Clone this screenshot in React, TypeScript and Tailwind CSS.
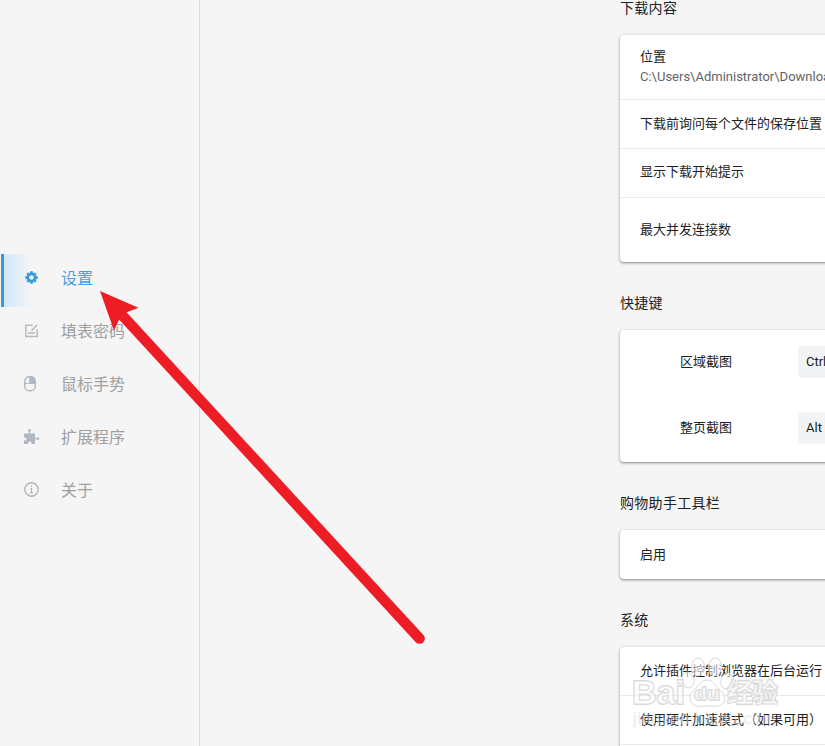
import type { ReactNode } from "react";
import clsx from "clsx";

const GearIcon = () => (
  <svg width="14" height="14" viewBox="0 0 14 14" fill="none" stroke="#3a9ad9">
    <circle cx="6.5" cy="6.5" r="3.7" strokeWidth="2.8" />
    <path
      d="M6.5 .2v2M6.5 10.8v2M.2 6.5h2M10.8 6.5h2M2.2 2.2l1 1M9.8 9.8l1 1M2.2 10.8l1-1M9.8 3.2l1-1"
      strokeWidth="2.6"
    />
  </svg>
);

const FormIcon = () => (
  <svg width="14" height="14" viewBox="0 0 14 14" fill="none" stroke="#b4bac4" strokeWidth="1.5">
    <path d="M7.5 1.2H.8v11.3h11.4V5.5M3 8.9h7M12.2 1L6.5 6.6" />
  </svg>
);

const MouseIcon = () => (
  <svg width="14" height="16" viewBox="0 0 14 16" fill="none">
    <rect x=".8" y=".8" width="10.4" height="14" rx="4.4" stroke="#aeb6c2" strokeWidth="1.4" />
    <path d="M6 .8c3 0 5.2 1.6 5.2 4.4v2.3H6z" fill="#aeb6c2" />
    <path d="M1 7.4h10M5.8 1v6.4" stroke="#aeb6c2" />
  </svg>
);

const PuzzleIcon = () => (
  <svg width="16" height="16" viewBox="0 0 16 16" fill="#b0b8c3">
    <path d="M0 4.5h4.8V2.7a1.4 1.4 0 1 1 1.3 0v1.8H11V9h1.8a1.3 1.3 0 1 1 0 1.3H11V15H7.5v-1.3a1.7 1.7 0 0 0-3.3 0V15H0v-3.4h1.2a1.6 1.6 0 0 0 0-3.1H0z" />
  </svg>
);

const InfoIcon = () => (
  <svg width="16" height="16" viewBox="0 0 16 16" fill="none" stroke="#b0b5c0">
    <circle cx="7.5" cy="7.5" r="6.7" strokeWidth="1.4" />
    <path d="M7.5 3.6v1.4M6.5 6.5h1v4.3M6.2 10.9h2.6" strokeWidth="1.2" />
  </svg>
);

const navItems = [
  { label: "设置", icon: <GearIcon />, offset: "pl-px pb-px", active: true },
  { label: "填表密码", icon: <FormIcon />, offset: "pl-px pb-px" },
  { label: "鼠标手势", icon: <MouseIcon />, offset: "pb-px" },
  { label: "扩展程序", icon: <PuzzleIcon />, offset: "" },
  { label: "关于", icon: <InfoIcon />, offset: "" },
];

const Sidebar = () => (
  <nav className="w-[200px] shrink-0 border-r border-[#dcdcdc] pl-px pt-[254px]">
    {navItems.map((item) => (
      <div
        key={item.label}
        className={clsx(
          "flex h-[53px] items-center border-l-[3px] pb-[3px]",
          item.active
            ? "border-[#3a9ad9] bg-[linear-gradient(to_right,#cfe8fa,#f5f5f5_27px)] text-[#46a0dc]"
            : "border-transparent text-[#a0a0a0]"
        )}
      >
        <span className="flex w-[57px] items-center pb-0.5 pl-5">
          <span className={clsx("flex", item.offset)}>{item.icon}</span>
        </span>
        <span className="text-base leading-6">{item.label}</span>
      </div>
    ))}
  </nav>
);

const Section = ({ title, children }: { title: string; children: ReactNode }) => (
  <section>
    <h2 className="mb-[17px] h-5 whitespace-nowrap text-[14px] leading-5 tracking-[0.3px]">{title}</h2>
    <div className="rounded bg-white shadow-[0_1px_2px_rgba(60,64,67,0.45),0_1px_3px_1px_rgba(60,64,67,0.15)]">
      {children}
    </div>
  </section>
);

const Row = ({ label, className }: { label: string; className?: string }) => (
  <div className={clsx("flex items-center whitespace-nowrap border-[#ebebeb] px-5", className)}>{label}</div>
);

const Shortcut = ({ label, keys }: { label: string; keys: string }) => (
  <div className="flex h-[66px] items-center pb-0.5 pl-[60px]">
    <span className="w-[118px] shrink-0">{label}</span>
    <span className="flex h-8 w-40 shrink-0 items-center rounded bg-[#f1f3f4] px-2">{keys}</span>
  </div>
);

const Arrow = () => (
  <svg className="absolute left-0 top-0" width="825" height="746" viewBox="0 0 825 746">
    <path d="M122 315L419.6 638.6" stroke="#ee1c25" strokeWidth="10.5" strokeLinecap="round" />
    <path d="M100 291l38.5 16.8-12.5 4.7-6.7 6.8-5.3 11.2z" fill="#ee1c25" />
  </svg>
);

const Watermark = () => (
  <svg className="absolute left-[625px] top-[650px]" width="200" height="90" viewBox="0 0 200 90">
    <g fill="#fff" fillOpacity="0.55" stroke="#cccccc" strokeOpacity="0.75">
      <ellipse cx="63" cy="30" rx="6" ry="8" transform="rotate(-12 63 30)" />
      <ellipse cx="73" cy="17" rx="6.5" ry="9" />
      <ellipse cx="90" cy="17" rx="6.5" ry="9" transform="rotate(6 90 17)" />
      <ellipse cx="102" cy="31" rx="6" ry="8" transform="rotate(20 102 31)" />
      <path d="M82 30c-6 0-8 5-12 9-4 3-7 7-4 13 3 6 10 4 16 4s14 2 17-4c2-6-1-10-5-13-4-4-6-9-12-9z" />
      <g paintOrder="stroke" strokeWidth="1.8" fontFamily="'Liberation Sans', sans-serif" fontWeight="bold">
        <text x="7" y="54" fontSize="34" textLength="53" lengthAdjust="spacingAndGlyphs">Bai</text>
        <text x="69" y="50" fontSize="19" textLength="26" lengthAdjust="spacingAndGlyphs">du</text>
        <text x="102" y="52" fontSize="26" textLength="51" fontFamily="'Noto Sans CJK SC', sans-serif">经验</text>
      </g>
    </g>
    <text x="8" y="74" fontSize="17" fill="#ddd" fillOpacity="0.6" textLength="143" fontFamily="'Liberation Sans', sans-serif">jingyan.baidu.com</text>
  </svg>
);

const App = () => {
  return (
    <div className="relative flex h-[746px] w-[825px] overflow-hidden bg-[#f5f5f5] font-[Roboto,'Noto_Sans_CJK_SC',sans-serif] text-[13px] leading-5 text-[#202124]">
      <Sidebar />
      <main className="-mt-0.5 ml-[420px] w-[680px] shrink-0 space-y-[31px]">
        <Section title="下载内容">
          <div className="h-[65px] whitespace-nowrap border-b border-[#ebebeb] px-5 pt-3">
            <div>位置</div>
            <div className="text-[#5f6368]">C:\Users\Administrator\Downloads</div>
          </div>
          <Row label="下载前询问每个文件的保存位置" className="h-[49px] border-b" />
          <Row label="显示下载开始提示" className="h-[49px] border-b pb-0.5" />
          <Row label="最大并发连接数" className="h-16" />
        </Section>
        <Section title="快捷键">
          <Shortcut label="区域截图" keys="Ctrl + Shift + X" />
          <Shortcut label="整页截图" keys="Alt + Shift + X" />
        </Section>
        <Section title="购物助手工具栏">
          <Row label="启用" className="h-[49px]" />
        </Section>
        <Section title="系统">
          <Row label="允许插件控制浏览器在后台运行" className="h-[49px] border-b" />
          <Row label="使用硬件加速模式（如果可用）" className="h-[49px] border-b" />
          <Row label="" className="h-[49px]" />
        </Section>
      </main>
      <Arrow />
      <Watermark />
    </div>
  );
};

export default App;
